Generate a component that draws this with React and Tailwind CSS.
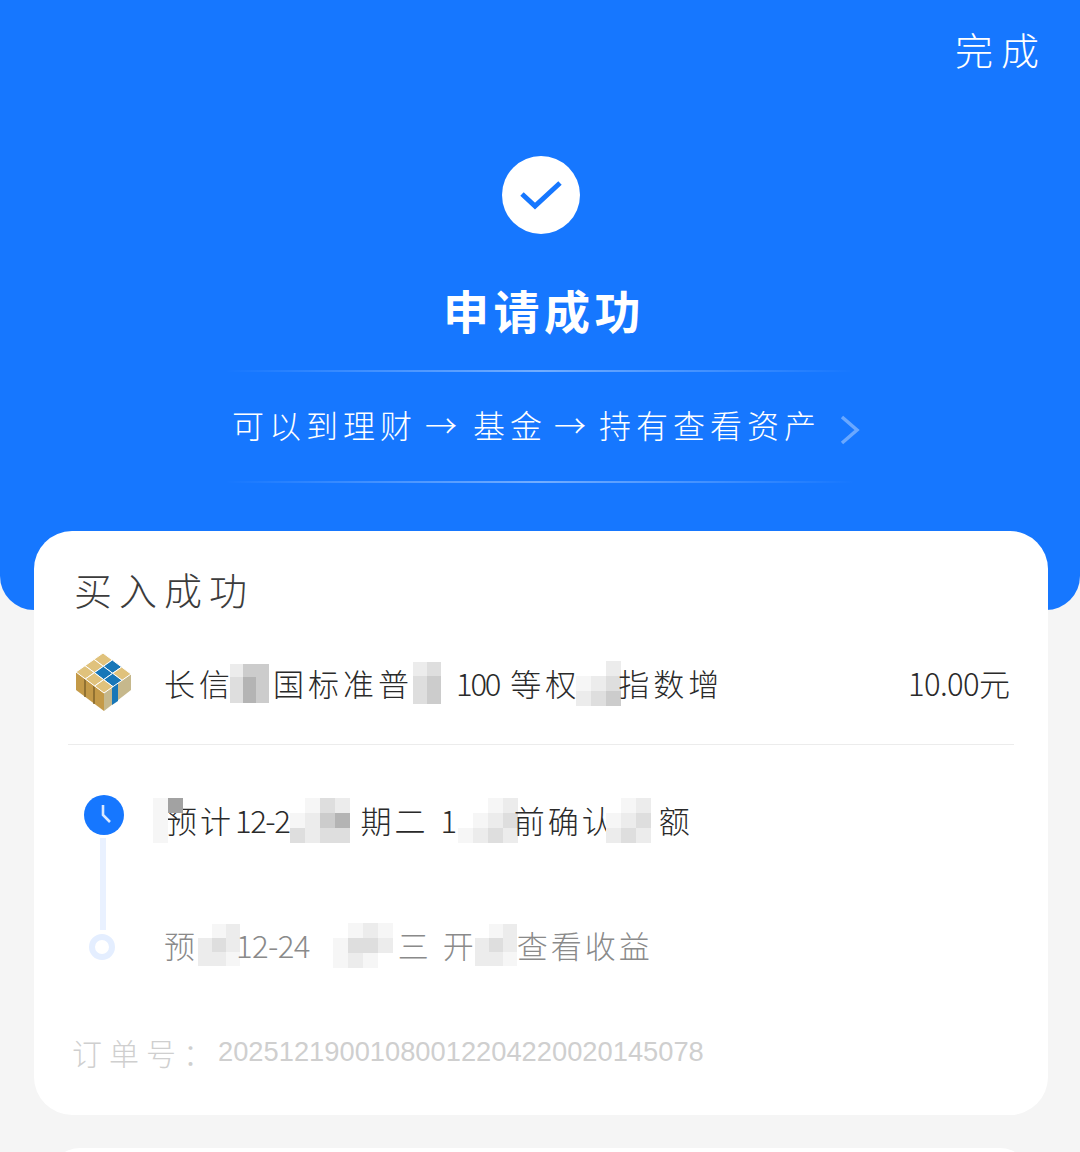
import React from 'react'

const CJK = "font-['Noto_Sans_CJK_SC','Noto_Sans',sans-serif]"

// grey blocks of the censored text, one string per row, digit = darkness
const SHADES = { 0: 'transparent', 1: '#f6f6f6', 2: '#ececec', 3: '#dedede', 4: '#cccccc', 5: '#b4b4b4', 6: '#a2a2a2' }

function Mosaic({ cells, size = 15, className = '' }) {
  return (
    <div className={`flex shrink-0 flex-col ${className}`}>
      {cells.map((row, i) => (
        <div key={i} className="flex">
          {row.split('').map((c, j) => (
            <div key={j} style={{ width: size, height: size, background: SHADES[c] }} />
          ))}
        </div>
      ))}
    </div>
  )
}

// top face of the logo cube, 3x3 tiles; T = back corner
const tilePoint = (u, v) => [27 + u * 28 / 3 - v * 27 / 3, 1 + u * 21 / 3 + v * 19 / 3]
const BLUE_TILES = ['1,0', '1,1', '2,1']

function Logo() {
  const tiles = []
  for (let u = 0; u < 3; u++) {
    for (let v = 0; v < 3; v++) {
      const pts = [tilePoint(u, v), tilePoint(u + 1, v), tilePoint(u + 1, v + 1), tilePoint(u, v + 1)]
      tiles.push({ key: `${u},${v}`, d: pts.map(p => p.join(',')).join(' ') })
    }
  }
  return (
    <svg width="56" height="60" viewBox="0 0 56 60" className="mt-[2px] shrink-0">
      <path d="M0 20 L28 41 L28 59 L0 38 Z" fill="#c49a48" />
      <path d="M55 22 L28 41 L28 59 L55 38 Z" fill="#c6b88c" />
      <path d="M9 27 L9 45 M18 34 L18 52" stroke="#7d6128" strokeWidth="1.4" />
      <path d="M36 35 L42 31 L42 49 L36 53 Z" fill="#1877b8" />
      {tiles.map(t => (
        <polygon
          key={t.key}
          points={t.d}
          fill={BLUE_TILES.includes(t.key) ? '#1877b8' : '#e0c27c'}
          stroke="#fff"
          strokeWidth="1"
        />
      ))}
    </svg>
  )
}

function Divider() {
  return <div className="h-[2px] w-[630px] bg-gradient-to-r from-transparent via-[#ffffff66] to-transparent" />
}

export default function App() {
  return (
    <div className={`relative h-[1152px] w-[1080px] overflow-hidden bg-[#f5f5f5] ${CJK}`}>
      <div className="flex h-[610px] flex-col items-center rounded-b-[34px] bg-[#1677ff] text-white">
        <div className="flex h-[156px] w-full justify-end pr-[33px] pt-[22px] text-[38px] leading-[54px] tracking-[8px] font-light">
          完成
        </div>
        <div className="ml-[2px] flex h-[78px] w-[78px] items-center justify-center rounded-full bg-white">
          <svg width="44" height="30" viewBox="0 0 44 30" fill="none">
            <path d="M3 14 L16 26 L41 3" stroke="#1677ff" strokeWidth="5" />
          </svg>
        </div>
        <div className="mt-[46px] h-[58px] pl-[8px] text-[46px] font-bold leading-[58px] tracking-[4.5px]">申请成功</div>
        <div className="mt-[32px]"><Divider /></div>
        <div className="mt-[23px] flex h-[58px] w-[640px] items-center whitespace-nowrap pl-[12px] text-[32px] font-light leading-[58px] tracking-[5px]">
          <span>可以到理财</span>
          <span className="ml-[8px] mr-[11px]">→</span>
          <span>基金</span>
          <span className="ml-[7px] mr-[8px]">→</span>
          <span>持有查看资产</span>
          <svg width="20" height="32" viewBox="0 0 20 32" fill="none" className="ml-auto mt-[12px] shrink-0">
            <path d="M2 3 L17 16 L2 29" stroke="#6aa8ff" strokeWidth="3.5" />
          </svg>
        </div>
        <div className="mt-[28px]"><Divider /></div>
      </div>

      <div className="relative z-10 mx-[34px] mt-[-79px] h-[584px] w-[1014px] rounded-[38px] bg-white px-[34px]">
        <div className="pl-[6px] pt-[33px] text-[38px] font-light leading-[50px] tracking-[7px] text-[#3c3c3c]">买入成功</div>

        <div className="mt-[36px] flex h-[95px] items-start border-b border-[#ececec] pl-[8px]">
          <Logo />
          <div className="ml-[32px] mt-[11px] flex h-[44px] items-center whitespace-nowrap text-[31px] font-light tracking-[4px] text-[#2a2a2a]">
            <span>长信</span>
            <Mosaic size={13} className="ml-[-4px] mr-[4px]" cells={['244', '354', '354']} />
            <span>国标准普</span>
            <Mosaic size={14} cells={['230', '340', '340']} />
            <span className="ml-[1px] tracking-[-2.2px]">100</span>
            <span className="ml-[11px]">等权</span>
            <Mosaic size={15} className="ml-[-4px]" cells={['002', '123', '234']} />
            <span className="ml-[-3px]">指数增</span>
          </div>
          <div className="ml-auto mr-[4px] mt-[11px] h-[44px] text-[31px] font-light leading-[44px] text-[#2a2a2a]">
            <span className="tracking-[-0.6px]">10.00</span>元
          </div>
        </div>

        <div className="relative mt-[50px] flex h-[60px] pl-[16px]">
          <div className="flex h-[40px] w-[40px] shrink-0 items-center justify-center rounded-full bg-[#1677ff]">
            <svg width="24" height="24" viewBox="0 0 24 24" fill="none">
              <path d="M11 2 L11 12 L18 19" stroke="#dbe9ff" strokeWidth="2.6" />
            </svg>
          </div>
          <div className="ml-[42px] mt-[3px] flex h-[44px] items-center whitespace-nowrap text-[31px] font-light tracking-[3px] text-[#2a2a2a]">
            <span>预计</span>
            <span className="ml-[1px] tracking-[-1.4px]">12-2</span>
            <Mosaic size={15} className="ml-[1px] mr-[10px]" cells={['0132', '1245', '3233']} />
            <span>期二</span>
            <span className="ml-[12px] tracking-[-1.4px]">1</span>
            <Mosaic size={15} className="ml-[2px] mr-[-4px]" cells={['0012', '0123', '1232']} />
            <span>前确认</span>
            <Mosaic size={15} className="ml-[-10px] mr-[8px]" cells={['012', '123', '232']} />
            <span>额</span>
          </div>
          <Mosaic size={15} className="absolute left-[85px] top-[3px]" cells={['16', '10', '10']} />
        </div>

        <div className="absolute left-[66px] top-[307px] h-[92px] w-[6px] bg-[#e9f1ff]" />

        <div className="mt-[68px] flex h-[60px] pl-[16px]">
          <div className="ml-[5px] mt-[11px] h-[26px] w-[26px] shrink-0 rounded-full border-[6px] border-[#e4eeff]" />
          <div className="ml-[49px] flex h-[44px] items-center whitespace-nowrap text-[31px] font-light tracking-[3px] text-[#8a8a8a]">
            <span>预</span>
            <Mosaic size={14} className="mr-[-4px]" cells={['012', '232', '221']} />
            <span className="tracking-[-0.6px]">12-24</span>
            <Mosaic size={15} className="ml-[23px] mr-[5px]" cells={['0121', '1332', '1210']} />
            <span>三</span>
            <span className="ml-[11px]">开</span>
            <Mosaic size={14} className="ml-[-2px]" cells={['012', '232', '221']} />
            <span>查看收益</span>
          </div>
        </div>

        <div className="mt-[47px] flex items-center whitespace-nowrap pl-[4px] text-[#cfcfcf]">
          <span className="w-[146px] text-[30px] font-light leading-[44px] tracking-[7px]">订单号：</span>
          <span className="font-['Liberation_Sans',sans-serif] text-[27.3px] leading-[44px]">20251219001080012204220020145078</span>
        </div>
      </div>

      <div className="mx-[50px] mt-[33px] h-[60px] rounded-t-[30px] bg-white" />
    </div>
  )
}
